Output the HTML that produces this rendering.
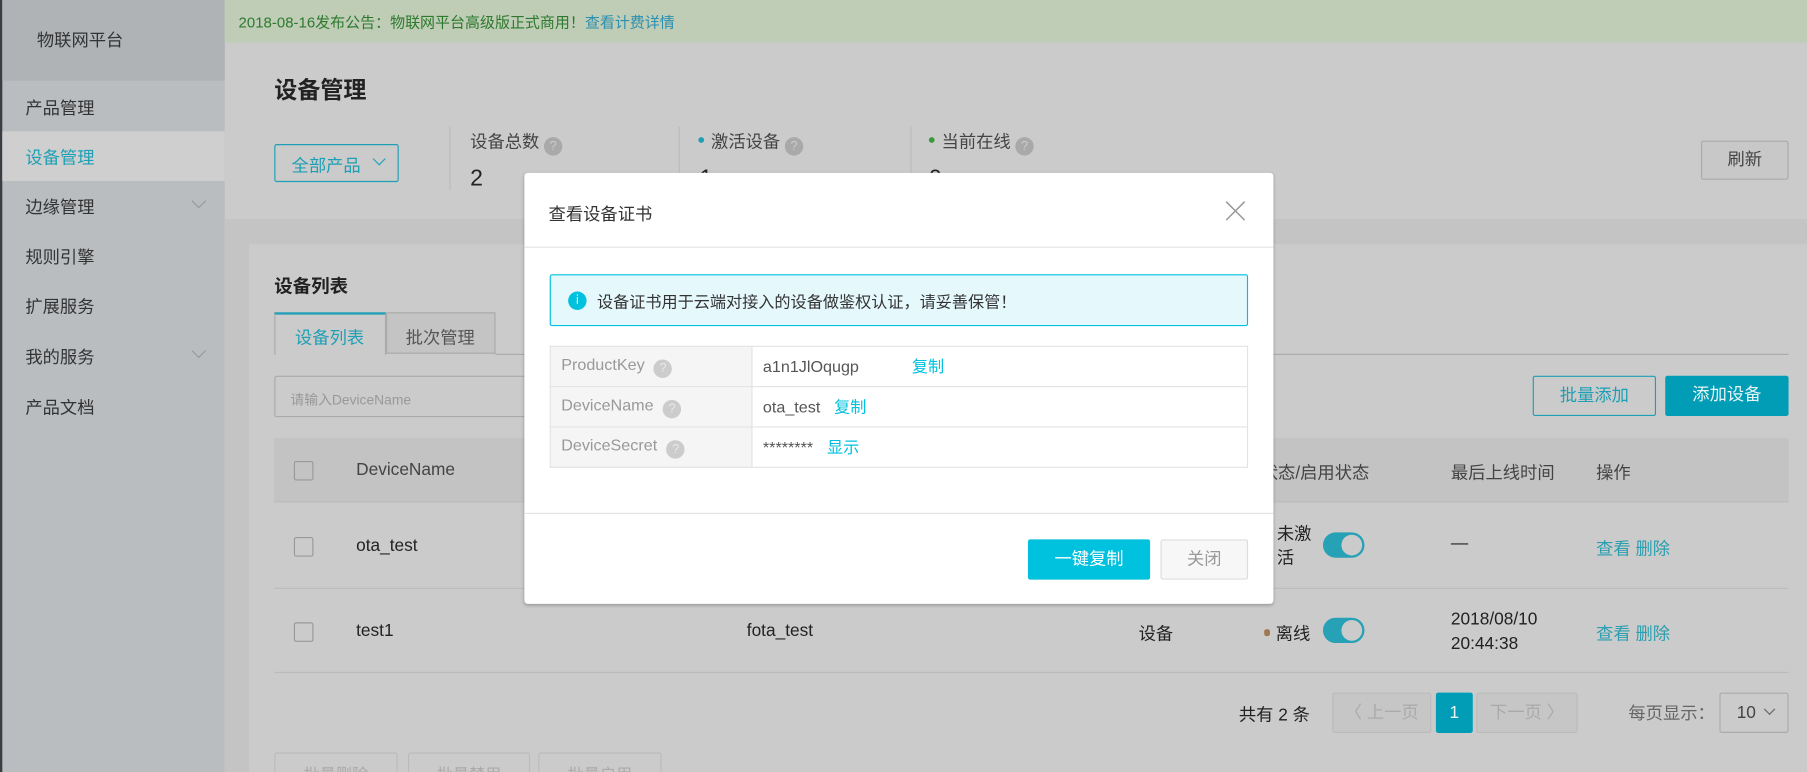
<!DOCTYPE html>
<html><head><meta charset="utf-8"><style>
*{box-sizing:border-box;margin:0;padding:0}
html,body{width:1807px;height:772px;overflow:hidden;background:#cbcbcb}
#clip{position:relative;width:1807px;height:772px;overflow:hidden}
#w{position:absolute;left:0;top:0;width:1568px;height:670px;overflow:hidden;transform:scale(1.15242);transform-origin:0 0;font-family:"Liberation Sans","Noto Sans CJK SC",sans-serif;font-size:14px;color:#333;background:#cbcbcb}
.a{position:absolute;white-space:nowrap}
.sb{position:absolute;left:0;top:0;width:195px;height:670px;background:#b9bdc0;border-left:2px solid #3a3d42}
.ni{position:absolute;left:20px;font-size:15px;color:#333}
.chev{position:absolute;left:166px;width:9px;height:9px;border-right:1px solid #999;border-bottom:1px solid #999;transform:rotate(45deg)}
.q{display:inline-block;width:16px;height:16px;border-radius:50%;background:#a9a9a9;color:#ccc;font-size:11px;text-align:center;line-height:16px;vertical-align:-2px;margin-left:4px}
.btn{position:absolute;border:1px solid #aaa;border-radius:2px;text-align:center}
.cb{position:absolute;left:255px;width:17px;height:17px;border:1px solid #999;border-radius:2px}
.tg{position:absolute;width:36px;height:22px;border-radius:11px;background:#26a1b5}
.tg::after{content:"";position:absolute;right:2px;top:2px;width:18px;height:18px;border-radius:50%;background:#cbcbcb}
.lk{color:#2a9fb0}
.m td{border:1px solid #e3e3e3;height:35px;padding-left:9px}
</style></head><body><div id="clip"><div id="w">
<div class="sb">
<div style="position:absolute;left:0;top:0;width:193px;height:70px;background:#afb3b6"></div>
<div class="a" style="left:30px;top:24px;font-size:15px;color:#333">物联网平台</div>
<div style="position:absolute;left:0;top:114px;width:193px;height:43px;background:#cfcfcf"></div>
<div class="ni a" style="top:83px">产品管理</div>
<div class="ni a" style="top:126px;color:#1e9fb5">设备管理</div>
<div class="ni a" style="top:169px">边缘管理</div><div class="chev" style="top:170px"></div>
<div class="ni a" style="top:212px">规则引擎</div>
<div class="ni a" style="top:255px">扩展服务</div>
<div class="ni a" style="top:299px">我的服务</div><div class="chev" style="top:300px"></div>
<div class="ni a" style="top:343px">产品文档</div>
</div>
<div style="position:absolute;left:195px;top:0;width:1373px;height:37px;background:#bfccb6"></div>
<div class="a" style="left:207px;top:9px;font-size:13px;color:#2d7a2d">2018-08-16发布公告：物联网平台高级版正式商用！<span style="color:#2a8fb0">查看计费详情</span></div>
<div class="a" style="left:238px;top:62px;font-size:20px;font-weight:bold;color:#222">设备管理</div>
<div style="position:absolute;left:238px;top:125px;width:108px;height:33px;border:1px solid #1e9fb5;border-radius:2px"></div>
<div class="a" style="left:253px;top:133px;color:#1e9fb5;font-size:15px">全部产品</div>
<div style="position:absolute;left:325px;top:134px;width:8px;height:8px;border-right:1px solid #1e9fb5;border-bottom:1px solid #1e9fb5;transform:rotate(45deg)"></div>
<div style="position:absolute;left:390px;top:110px;width:1px;height:55px;background:#bbb"></div>
<div style="position:absolute;left:589px;top:110px;width:1px;height:55px;background:#bbb"></div>
<div style="position:absolute;left:790px;top:110px;width:1px;height:55px;background:#bbb"></div>
<div class="a" style="left:408px;top:112px;font-size:15px;color:#444">设备总数<span class="q">?</span></div>
<div class="a" style="left:408px;top:144px;font-size:20px;color:#222">2</div>
<div class="a" style="left:607px;top:144px;font-size:20px;color:#222">1</div>
<div class="a" style="left:806px;top:144px;font-size:20px;color:#222">0</div>
<div class="a" style="left:606px;top:112px;font-size:15px;color:#444"><span style="display:inline-block;width:5px;height:5px;border-radius:50%;background:#1e9fb5;vertical-align:4px;margin-right:6px"></span>激活设备<span class="q">?</span></div>
<div class="a" style="left:806px;top:112px;font-size:15px;color:#444"><span style="display:inline-block;width:5px;height:5px;border-radius:50%;background:#3a9a3a;vertical-align:4px;margin-right:6px"></span>当前在线<span class="q">?</span></div>
<div class="btn" style="left:1476px;top:122px;width:76px;height:34px;line-height:32px;font-size:15px;color:#444;background:#c8c8c8">刷新</div>
<div style="position:absolute;left:195px;top:190px;width:1373px;height:22px;background:#c4c4c4"></div>
<div style="position:absolute;left:195px;top:190px;width:21px;height:480px;background:#c4c4c4"></div>
<div class="a" style="left:238px;top:235px;font-size:16px;font-weight:bold;color:#222">设备列表</div>
<div style="position:absolute;left:238px;top:271px;width:97px;height:37px;border:1px solid #aaa;border-top:2px solid #1e9fb5;border-bottom:none;background:#cbcbcb"></div>
<div class="a" style="left:256px;top:282px;font-size:15px;color:#1e9fb5">设备列表</div>
<div style="position:absolute;left:335px;top:271px;width:95px;height:36px;border:1px solid #aaa;background:#c4c4c4"></div>
<div class="a" style="left:352px;top:282px;font-size:15px;color:#555">批次管理</div>
<div style="position:absolute;left:430px;top:307px;width:1122px;height:1px;background:#aaa"></div>
<div style="position:absolute;left:238px;top:326px;width:230px;height:36px;border:1px solid #aaa;border-radius:2px"></div>
<div class="a" style="left:252px;top:338px;font-size:12px;color:#999">请输入DeviceName</div>
<div class="btn" style="left:1330px;top:326px;width:107px;height:35px;line-height:33px;border-color:#1e9fb5;color:#1e9fb5;font-size:15px">批量添加</div>
<div class="btn" style="left:1445px;top:326px;width:107px;height:35px;line-height:33px;border:none;background:#019db6;color:#e8f4f6;font-size:15px">添加设备</div>
<div style="position:absolute;left:238px;top:380px;width:1314px;height:56px;background:#c3c3c3;border-bottom:1px solid #bbb"></div>
<div class="cb" style="top:400px"></div>
<div class="a" style="left:309px;top:399px;font-size:15px;color:#444">DeviceName</div>
<div class="a" style="left:1094px;top:399px;font-size:15px;color:#444">状态/启用状态</div>
<div class="a" style="left:1259px;top:399px;font-size:15px;color:#444">最后上线时间</div>
<div class="a" style="left:1385px;top:399px;font-size:15px;color:#444">操作</div>
<div style="position:absolute;left:238px;top:510px;width:1314px;height:1px;background:#bbb"></div>
<div style="position:absolute;left:238px;top:583px;width:1314px;height:1px;background:#bbb"></div>
<div class="cb" style="top:466px"></div>
<div class="a" style="left:309px;top:465px;font-size:15px;color:#222">ota_test</div>
<div class="a" style="left:1108px;top:453px;font-size:15px;color:#222;line-height:21px">未激<br>活</div>
<div class="tg" style="left:1148px;top:462px"></div>
<div class="a" style="left:1259px;top:463px;font-size:15px;color:#222">—</div>
<div class="a lk" style="left:1385px;top:465px;font-size:15px">查看 删除</div>
<div class="cb" style="top:540px"></div>
<div class="a" style="left:309px;top:539px;font-size:15px;color:#222">test1</div>
<div class="a" style="left:648px;top:539px;font-size:15px;color:#222">fota_test</div>
<div class="a" style="left:988px;top:539px;font-size:15px;color:#222">设备</div>
<div class="a" style="left:1097px;top:539px;font-size:15px;color:#222"><span style="display:inline-block;width:5px;height:6px;border-radius:2px;background:#a07850;vertical-align:3px;margin-right:5px"></span>离线</div>
<div class="tg" style="left:1148px;top:536px"></div>
<div class="a" style="left:1259px;top:527px;font-size:15px;color:#222;line-height:21px">2018/08/10<br>20:44:38</div>
<div class="a lk" style="left:1385px;top:539px;font-size:15px">查看 删除</div>
<div class="a" style="left:1075px;top:609px;font-size:15px;color:#222">共有 2 条</div>
<div class="btn" style="left:1156px;top:601px;width:86px;height:35px;line-height:33px;border-color:#bbb;color:#aaa;background:#c6c6c6;font-size:15px">〈 上一页</div>
<div class="btn" style="left:1246px;top:601px;width:32px;height:35px;line-height:35px;border:none;background:#019db6;color:#e8f4f6;font-size:15px">1</div>
<div class="btn" style="left:1281px;top:601px;width:88px;height:35px;line-height:33px;border-color:#bbb;color:#aaa;background:#c6c6c6;font-size:15px">下一页 〉</div>
<div class="a" style="left:1413px;top:608px;font-size:15px;color:#666">每页显示：</div>
<div class="btn" style="left:1492px;top:601px;width:60px;height:35px;line-height:33px;text-align:left;padding-left:14px;color:#444;font-size:15px">10</div>
<div style="position:absolute;left:1532px;top:612px;width:7px;height:7px;border-right:1px solid #666;border-bottom:1px solid #666;transform:rotate(45deg)"></div>
<div class="btn" style="left:238px;top:653px;width:107px;height:35px;border-color:#bbb;color:#aaa;padding-top:8px">批量删除</div>
<div class="btn" style="left:354px;top:653px;width:106px;height:35px;border-color:#bbb;color:#aaa;padding-top:8px">批量禁用</div>
<div class="btn" style="left:467px;top:653px;width:107px;height:35px;border-color:#bbb;color:#aaa;padding-top:8px">批量启用</div>
<div style="position:absolute;left:455px;top:150px;width:650px;height:374px;background:#fff;border-radius:3px;box-shadow:0 1px 3px rgba(0,0,0,.25)">
<div class="a" style="left:21px;top:25px;font-size:15px;color:#333">查看设备证书</div>
<svg class="a" style="left:608px;top:24px" width="18" height="18" viewBox="0 0 18 18"><path d="M1 1L17 17M17 1L1 17" stroke="#999" stroke-width="1.3" fill="none"/></svg>
<div style="position:absolute;left:0;top:64px;width:650px;height:1px;background:#e3e3e3"></div>
<div style="position:absolute;left:22px;top:88px;width:606px;height:45px;background:#e5f8fc;border:1px solid #00c1de;border-radius:2px"></div>
<div style="position:absolute;left:38px;top:103px;width:16px;height:16px;border-radius:50%;background:#00c1de;color:#fff;font-size:11px;text-align:center;line-height:16px">i</div>
<div class="a" style="left:63px;top:102px;font-size:14px;color:#333">设备证书用于云端对接入的设备做鉴权认证，请妥善保管！</div>
<table class="m" style="position:absolute;left:22px;top:150px;width:606px;border-collapse:collapse;font-size:14px">
<tr><td style="width:175px;background:#f5f5f5;color:#999">ProductKey<span class="q" style="background:#ccc;color:#e8e8e8;margin-left:8px">?</span></td><td style="color:#555">a1n1JlOqugp<span style="color:#00c1de;margin-left:46px">复制</span></td></tr>
<tr><td style="background:#f5f5f5;color:#999">DeviceName<span class="q" style="background:#ccc;color:#e8e8e8;margin-left:8px">?</span></td><td style="color:#555">ota_test<span style="color:#00c1de;margin-left:12px">复制</span></td></tr>
<tr><td style="background:#f5f5f5;color:#999">DeviceSecret<span class="q" style="background:#ccc;color:#e8e8e8;margin-left:8px">?</span></td><td style="color:#555">********<span style="color:#00c1de;margin-left:12px">显示</span></td></tr>
</table>
<div style="position:absolute;left:0;top:295px;width:650px;height:1px;background:#e3e3e3"></div>
<div class="btn" style="left:437px;top:318px;width:106px;height:35px;line-height:35px;border:none;background:#00c1de;color:#fff;font-size:15px">一键复制</div>
<div class="btn" style="left:552px;top:318px;width:76px;height:35px;line-height:33px;border-color:#ddd;background:#f7f7f7;color:#999;font-size:15px">关闭</div>
</div>
</div></div></body></html>
